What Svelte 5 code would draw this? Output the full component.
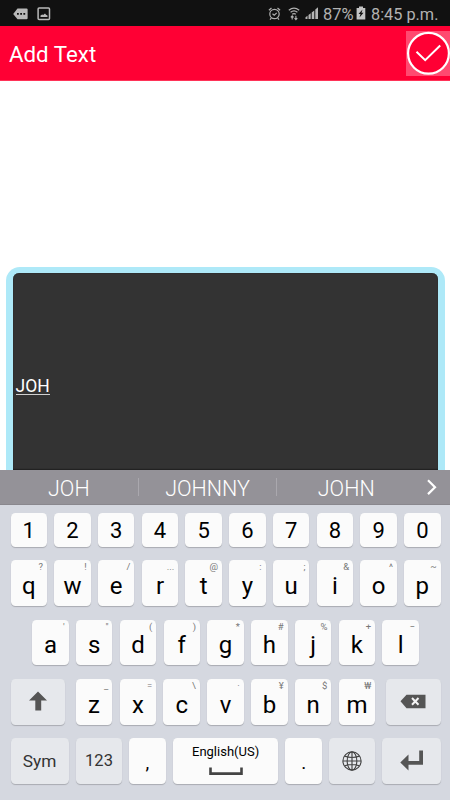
<script>
  const digits = ['1', '2', '3', '4', '5', '6', '7', '8', '9', '0'];
  const top = [['q', '?'], ['w', '!'], ['e', '/'], ['r', '...'], ['t', '@'], ['y', ':'], ['u', ';'], ['i', '&'], ['o', '^'], ['p', '~']];
  const home = [['a', "'"], ['s', '"'], ['d', '('], ['f', ')'], ['g', '*'], ['h', '#'], ['j', '%'], ['k', '+'], ['l', '−']];
  const bottom = [['z', '_'], ['x', '='], ['c', '\\'], ['v', '·'], ['b', '¥'], ['n', '$'], ['m', '₩']];
</script>

{#snippet letter(k)}
  <div class="key"><span class="main">{k[0]}</span><span class="alt">{k[1]}</span></div>
{/snippet}

<div class="screen">
  <div class="status">
    <svg class="tag" width="15" height="12" viewBox="0 0 15 12"><path d="M4.5 .5H13.5Q14.6 .5 14.6 1.6V10.2Q14.6 11.3 13.5 11.3H4.5L.2 6Z" fill="#b9b9b9" /><path d="M4 5h1.8v1.8H4zM7.2 5H9v1.8H7.2zM10.4 5h1.8v1.8h-1.8z" fill="#111" /></svg>
    <svg class="pic" width="14" height="14" viewBox="0 0 14 14"><rect x="1.1" y="1" width="11.4" height="11.6" rx="1" fill="none" stroke="#b9b9b9" stroke-width="1.5" /><path d="M3.5 10V8.500L5.200 7.500l1 .6L8 6.500l1 1.300 1.500.7V10Z" fill="#b9b9b9" /></svg>
    <div class="grow"></div>
    <svg class="alarm" width="13" height="14" viewBox="0 0 13 14" fill="none" stroke="#b0b0b0" stroke-width="1.2"><circle cx="6.5" cy="7" r="4.7" /><path d="M.9 3.200 3.500 1M12.100 3.200 9.500 1M4.500 6.800l1.700 1.500L8.700 5.800M3.300 11.200 2 12.700M9.700 11.200l1.300 1.500" /></svg>
    <svg class="wifi" width="12" height="14" viewBox="0 0 12 14" fill="none" stroke="#b0b0b0" stroke-width="1.2"><path d="M.8 3.300Q6-1 11.200 3.300M2.600 5.300Q6 2.500 9.400 5.300M4.200 7.200Q6 5.900 7.800 7.200" /><path d="M4.200 12.500V9M2.800 10.400l1.400-1.500 1.400 1.500M7.900 8.700v3.800M6.500 11.200l1.400 1.400 1.400-1.400" stroke-width="1.100" /></svg>
    <svg class="signal" width="14" height="13" viewBox="0 0 14 13" fill="#b4b4b4"><path d="M.5 12V10.200L2.500 8.800V12zM3.500 12V8L5.700 6.300V12zM6.700 12V5.500L9.300 3.500V12zM10.300 12V2.600L13 .2V12z" /></svg>
    <span class="percent">87%</span>
    <svg class="battery" width="10" height="15" viewBox="0 0 10 15"><path d="M3 .5h4v1.500h2.300v11.500H.6V2H3z" fill="#c4c4c4" /><path d="m6.500 3.500-4 4.500h2L3.500 11.500l4-4.800h-2z" fill="#111" /></svg>
    <span class="time">8:45 p.m.</span>
  </div>
  <header>
    <h1>Add Text</h1>
    <button aria-label="Done"><svg width="44" height="45" viewBox="0 0 44 45"><circle cx="22.5" cy="22.3" r="20.4" fill="#ff0034" stroke="#fff" stroke-width="2.2" /><path d="m10.500 20.700 8.700 8.400L34.200 14.500" fill="none" stroke="#fff" stroke-width="2" /></svg></button>
  </header>
  <main>
    <div class="frame"><div class="canvas"><span>JOH</span></div></div>
  </main>
  <div class="suggest">
    <div>JOH</div><i></i><div>JOHNNY</div><i></i><div>JOHN</div>
    <svg width="12" height="18" viewBox="0 0 12 18"><path d="m2 2.300 7 6.900-7 6.900" fill="none" stroke="#fff" stroke-width="2.200" /></svg>
  </div>
  <div class="keyboard">
    <div class="row nums">{#each digits as d}<div class="key"><span class="digit">{d}</span></div>{/each}</div>
    <div class="row">{#each top as k}{@render letter(k)}{/each}</div>
    <div class="row home">{#each home as k}{@render letter(k)}{/each}</div>
    <div class="row">
      <div class="key gray shift"><svg width="20" height="20" viewBox="0 0 20 20"><path d="M10 .4 19 9.600h-5.800V19.500H7.300V9.600H1Z" fill="#555" /></svg></div>
      {#each bottom as k}{@render letter(k)}{/each}
      <div class="key gray back"><svg width="26" height="15" viewBox="0 0 26 15"><path d="M.5 7.300 6.500.7H25.500V14.300H6.500Z" fill="#555" /><path d="m12 4 6.500 6.700M18.500 4 12 10.700" stroke="#f4f4f5" stroke-width="2" /></svg></div>
    </div>
    <div class="row last">
      <div class="key gray sym">Sym</div>
      <div class="key gray mid">123</div>
      <div class="key"><span class="punct">,</span></div>
      <div class="key space"><span>English(US)</span><svg width="34" height="9" viewBox="0 0 34 9"><path d="M1.500 .6V6.600H32.500V.6" fill="none" stroke="#444" stroke-width="2.600" /></svg></div>
      <div class="key"><span class="punct">.</span></div>
      <div class="key gray mid"><svg width="20" height="20" viewBox="0 0 20 20" fill="none" stroke="#444" stroke-width="1.150"><circle cx="10" cy="10" r="9.100" /><ellipse cx="10" cy="10" rx="4.800" ry="9.100" /><path d="M10 1v18M1 10h18M2.600 5.100q7.400 2.800 14.800 0M2.600 14.900q7.400-2.800 14.800 0" /></svg></div>
      <div class="key gray enter"><svg width="24" height="21" viewBox="0 0 24 21"><path d="M19.200.5H23V14.700H8.500V20.500L.3 12.500 8.500 4.600V11H19.200Z" fill="#555" /></svg></div>
    </div>
  </div>
</div>

<style>
  :global(body) { margin: 0; }
  .screen { width: 450px; height: 800px; display: flex; flex-direction: column; overflow: hidden; background: #fff; font-family: Roboto, sans-serif; }
  .status { height: 26px; flex: none; box-sizing: border-box; background: #111; color: #b2b2b2; display: flex; align-items: center; padding: 1px 0 0 13px; white-space: nowrap; }
  .status svg { flex: none; }
  .pic { margin-left: 9px; }
  .grow { flex: 1; }
  .wifi { margin-left: 7px; }
  .signal { margin-left: 5px; }
  .percent { width: 31px; margin-left: 4px; font-size: 16.5px; padding-top: 2px; }
  .battery { margin-left: 2px; }
  .time { margin-left: 5px; width: 79px; font-size: 16.3px; padding-top: 2px; }
  header { height: 55px; flex: none; box-sizing: border-box; background: #ff0034; border-bottom: 1px solid #ff3358; display: flex; align-items: center; justify-content: space-between; padding-left: 9px; }
  h1 { margin: 1.6px 0 0; font-size: 22.3px; line-height: 26px; font-weight: 400; color: #fff; }
  button { width: 44px; height: 45px; padding: 0; border: 0; background: #ff4a70; display: flex; margin-top: 1px; }
  main { height: 389px; flex: none; box-sizing: border-box; padding: 186px 5px 0 6px; }
  .frame { height: 203px; box-sizing: border-box; padding: 6px 7px 0; background: #aee9f8; border-radius: 14px 14px 0 0; }
  .canvas { height: 100%; box-sizing: border-box; background: #333; border-radius: 6px 6px 0 0; border-bottom: 1px solid #222; box-shadow: inset 0 0 1px #111; padding: 102px 0 0 2.5px; color: #fff; font-size: 17.5px; line-height: 22px; }
  .canvas span { display: inline-block; height: 19px; line-height: 22px; border-bottom: 1px solid #d0d0d0; }
  .suggest { height: 35px; flex: none; box-sizing: border-box; background: #949298; border-bottom: 1px solid #89878d; display: flex; align-items: center; color: #fff; font-size: 21.5px; font-weight: 300; }
  .suggest div { width: 137.7px; text-align: center; padding-top: 2px; }
  .suggest i { width: 1px; height: 18px; background: #aaa8ae; }
  .suggest svg { margin-left: 11px; }
  .keyboard { height: 295px; box-sizing: border-box; background: #d5d8e0; padding: 8px 9.3px 0 10.5px; display: flex; flex-direction: column; gap: 13.4px; }
  .row { height: 45.8px; display: flex; justify-content: space-between; flex: none; }
  .nums { height: 34px; }
  .home { padding: 0 21.7px; }
  .key { width: 36.5px; box-sizing: border-box; flex: none; position: relative; display: flex; align-items: center; justify-content: center; background: #fbfbfb; border-radius: 4.5px; box-shadow: 0 1px 1px #a9abb2; color: #000; }
  .gray { background: #e6e8ec; color: #333; }
  .main { font-size: 24px; line-height: 28px; padding-top: 6px; }
  .digit { font-size: 22px; }
  .alt { position: absolute; right: 4px; top: 1px; font-size: 9.5px; line-height: 12px; color: #777; }
  .shift, .back { width: 54.3px; padding-bottom: 1px; }
  .shift { margin-right: 3.7px; }
  .back { margin-left: 3.7px; }
  .sym { width: 58.3px; font-size: 17.3px; }
  .mid { width: 46px; font-size: 16.5px; }
  .enter { width: 58.3px; }
  .space { width: 105.3px; flex-direction: column; gap: 8px; font-size: 13px; line-height: 15px; }
  .space span { margin-top: -2px; }
  .punct { font-size: 19px; padding-top: 3px; }
</style>
